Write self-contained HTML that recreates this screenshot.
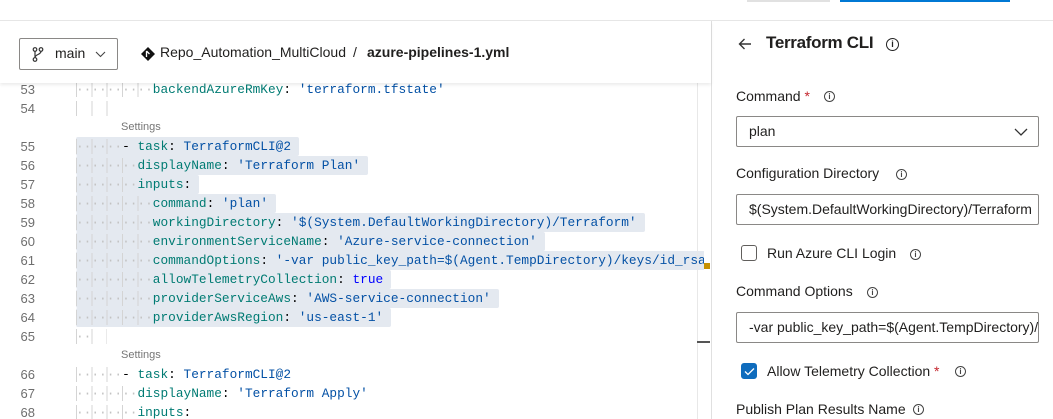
<!DOCTYPE html>
<html><head><meta charset="utf-8"><style>
*{margin:0;padding:0;box-sizing:border-box}
body{width:1053px;height:419px;overflow:hidden;background:#fff;font-family:"Segoe UI","Liberation Sans",sans-serif;color:#201f1e;position:relative}
.abs{position:absolute}
.code{position:absolute;left:0;top:80px;width:704px;height:339px;overflow:hidden}
.row{position:absolute;left:0;height:19px;width:704px}
.ln{position:absolute;left:0;width:35px;text-align:right;font-size:13px;color:#6e6e6e;line-height:19px;font-family:"Liberation Sans",sans-serif}
.tx{position:absolute;left:76px;font-family:"Liberation Mono",monospace;font-size:12.8px;line-height:19px;white-space:pre;color:#000}
.sel{background:#e4e9f0;padding-right:8px;border-radius:2px}
.ind{color:#c2c2c2;background:repeating-linear-gradient(to right,#d4d4d4 0 1px,transparent 1px 15.36px)}
.k{color:#007b73}.s{color:#0451a5}.b{color:#0000ff}
.set{position:absolute;left:121px;font-size:11px;color:#767676;line-height:19px}
.lbl{position:absolute;left:736px;font-size:14px;color:#201f1e}
.inp{position:absolute;left:736px;width:303px;height:31px;border:1px solid #8a8886;border-radius:2px;font-size:14px;line-height:29px;padding-left:12px;white-space:nowrap;overflow:hidden}
.info{display:inline-block;width:11px;height:11px;border:1.2px solid #444;border-radius:50%;position:absolute;font-size:8px;line-height:9px;text-align:center;font-weight:bold;color:#444}
.cb{position:absolute;left:741px;width:16px;height:16px;border:1px solid #605e5c;border-radius:3px}
</style></head><body>
<div class="abs" style="left:0;top:20px;width:1053px;height:1px;background:#e6e6e6"></div>
<div class="abs" style="left:747px;top:0;width:83px;height:2px;background:#e1e1e1"></div>
<div class="abs" style="left:840px;top:0;width:170px;height:2px;background:#0078d4"></div>
<div class="abs" style="left:0;top:21px;width:711px;height:62px;background:#fff;box-shadow:0 2px 3px rgba(0,0,0,.08);z-index:2">
<div class="abs" style="left:19px;top:17px;width:99px;height:32px;border:1px solid #8a8886;border-radius:2px">
<svg class="abs" style="left:12px;top:8px" width="12" height="15" viewBox="0 0 12 15" fill="none" stroke="#333" stroke-width="1.2"><circle cx="3" cy="2.5" r="1.8"/><circle cx="9" cy="2.5" r="1.8"/><circle cx="3" cy="12.5" r="1.8"/><path d="M3 4.3V10.7M9 4.3C9 8 3 7 3 10.7"/></svg>
<span class="abs" style="left:35px;top:6px;font-size:14px">main</span>
<svg class="abs" style="left:75px;top:12px" width="11" height="7" viewBox="0 0 11 7" fill="none" stroke="#444" stroke-width="1.1"><path d="M1 1l4.5 4.5L10 1"/></svg>
</div>
<svg class="abs" style="left:141px;top:26px" width="14" height="14" viewBox="0 0 14 14"><path d="M7 0L14 7L7 14L0 7Z" fill="#111"/><path d="M5.5 4v6M5.5 4l3 3" stroke="#fff" stroke-width="1.3" fill="none"/></svg>
<span class="abs" style="left:160px;top:23px;font-size:14px">Repo_Automation_MultiCloud</span>
<span class="abs" style="left:353px;top:23px;font-size:14px">/</span>
<span class="abs" style="left:367px;top:23px;font-size:14px;font-weight:bold">azure-pipelines-1.yml</span>
</div>
<div class="code">
<div class="row" style="top:0"><div class="ln">53</div><div class="tx"><span class="ind">··········</span><span class="k">backendAzureRmKey</span>: <span class="s">'terraform.tfstate'</span></div></div>
<div class="row" style="top:19px"><div class="ln">54</div><div class="tx"><span class="ind" style="color:transparent">      </span></div></div>
<div class="row" style="top:38px"><div class="set">Settings</div></div>
<div class="row" style="top:57px"><div class="ln">55</div><div class="tx sel"><span class="ind">······</span>- <span class="k">task</span>: <span class="s">TerraformCLI@2</span></div></div>
<div class="row" style="top:76px"><div class="ln">56</div><div class="tx sel"><span class="ind">········</span><span class="k">displayName</span>: <span class="s">'Terraform Plan'</span></div></div>
<div class="row" style="top:95px"><div class="ln">57</div><div class="tx sel"><span class="ind">········</span><span class="k">inputs</span>:</div></div>
<div class="row" style="top:114px"><div class="ln">58</div><div class="tx sel"><span class="ind">··········</span><span class="k">command</span>: <span class="s">'plan'</span></div></div>
<div class="row" style="top:133px"><div class="ln">59</div><div class="tx sel"><span class="ind">··········</span><span class="k">workingDirectory</span>: <span class="s">'$(System.DefaultWorkingDirectory)/Terraform'</span></div></div>
<div class="row" style="top:152px"><div class="ln">60</div><div class="tx sel"><span class="ind">··········</span><span class="k">environmentServiceName</span>: <span class="s">'Azure-service-connection'</span></div></div>
<div class="row" style="top:171px"><div class="ln">61</div><div class="tx sel"><span class="ind">··········</span><span class="k">commandOptions</span>: <span class="s">'-var public_key_path=$(Agent.TempDirectory)/keys/id_rsa.pub'</span></div></div>
<div class="row" style="top:190px"><div class="ln">62</div><div class="tx sel"><span class="ind">··········</span><span class="k">allowTelemetryCollection</span>: <span class="b">true</span></div></div>
<div class="row" style="top:209px"><div class="ln">63</div><div class="tx sel"><span class="ind">··········</span><span class="k">providerServiceAws</span>: <span class="s">'AWS-service-connection'</span></div></div>
<div class="row" style="top:228px"><div class="ln">64</div><div class="tx sel"><span class="ind">··········</span><span class="k">providerAwsRegion</span>: <span class="s">'us-east-1'</span></div></div>
<div class="row" style="top:247px"><div class="ln">65</div><div class="tx"><span class="ind">··  </span></div></div>
<div class="row" style="top:266px"><div class="set">Settings</div></div>
<div class="row" style="top:285px"><div class="ln">66</div><div class="tx"><span class="ind">······</span>- <span class="k">task</span>: <span class="s">TerraformCLI@2</span></div></div>
<div class="row" style="top:304px"><div class="ln">67</div><div class="tx"><span class="ind">········</span><span class="k">displayName</span>: <span class="s">'Terraform Apply'</span></div></div>
<div class="row" style="top:323px"><div class="ln">68</div><div class="tx"><span class="ind">········</span><span class="k">inputs</span>:</div></div>
</div>
<div class="abs" style="left:697px;top:83px;width:1px;height:336px;background:#e8e8e8"></div>
<div class="abs" style="left:704px;top:263px;width:6px;height:6px;background:#c69000"></div>
<div class="abs" style="left:697px;top:341px;width:13px;height:2px;background:#555"></div>
<div class="abs" style="left:711px;top:21px;width:1px;height:398px;background:#e0e0e0"></div>
<svg class="abs" style="left:738px;top:38px" width="14" height="12" viewBox="0 0 14 12" fill="none" stroke="#333" stroke-width="1.4"><path d="M13 6H1.5M6.5 1L1.5 6l5 5"/></svg>
<span class="abs" style="left:766px;top:33px;font-size:17px;font-weight:bold;letter-spacing:-0.3px">Terraform CLI</span>
<span class="info" style="left:886px;top:38px;width:13px;height:13px;border-width:1.6px;border-color:#222;color:#222;line-height:10px;font-size:9px">i</span>
<span class="lbl" style="top:88px">Command <span style="color:#c4262e">*</span></span><span class="info" style="left:824px;top:91px">i</span>
<div class="inp" style="top:116px">plan<svg class="abs" style="left:277px;top:11px" width="14" height="8" viewBox="0 0 14 8" fill="none" stroke="#333" stroke-width="1.3"><path d="M1 1l6 6 6-6"/></svg></div>
<span class="lbl" style="top:165px">Configuration Directory</span><span class="info" style="left:896px;top:169px">i</span>
<div class="inp" style="top:194px">$(System.DefaultWorkingDirectory)/Terraform</div>
<div class="cb" style="top:245px"></div>
<span class="lbl" style="left:767px;top:245px">Run Azure CLI Login</span><span class="info" style="left:910px;top:249px">i</span>
<span class="lbl" style="top:283px">Command Options</span><span class="info" style="left:867px;top:287px">i</span>
<div class="inp" style="top:312px">-var public_key_path=$(Agent.TempDirectory)/keys</div>
<div class="cb" style="top:363px;background:#0f6cbd;border-color:#0f6cbd"><svg class="abs" style="left:2px;top:3px" width="11" height="9" viewBox="0 0 11 9" fill="none" stroke="#fff" stroke-width="1.3"><path d="M1 4.5l3 3L10 1.5"/></svg></div>
<span class="lbl" style="left:767px;top:363px">Allow Telemetry Collection <span style="color:#c4262e">*</span></span><span class="info" style="left:955px;top:366px">i</span>
<span class="lbl" style="top:401px">Publish Plan Results Name</span><span class="info" style="left:913px;top:404px">i</span>
</body></html>
